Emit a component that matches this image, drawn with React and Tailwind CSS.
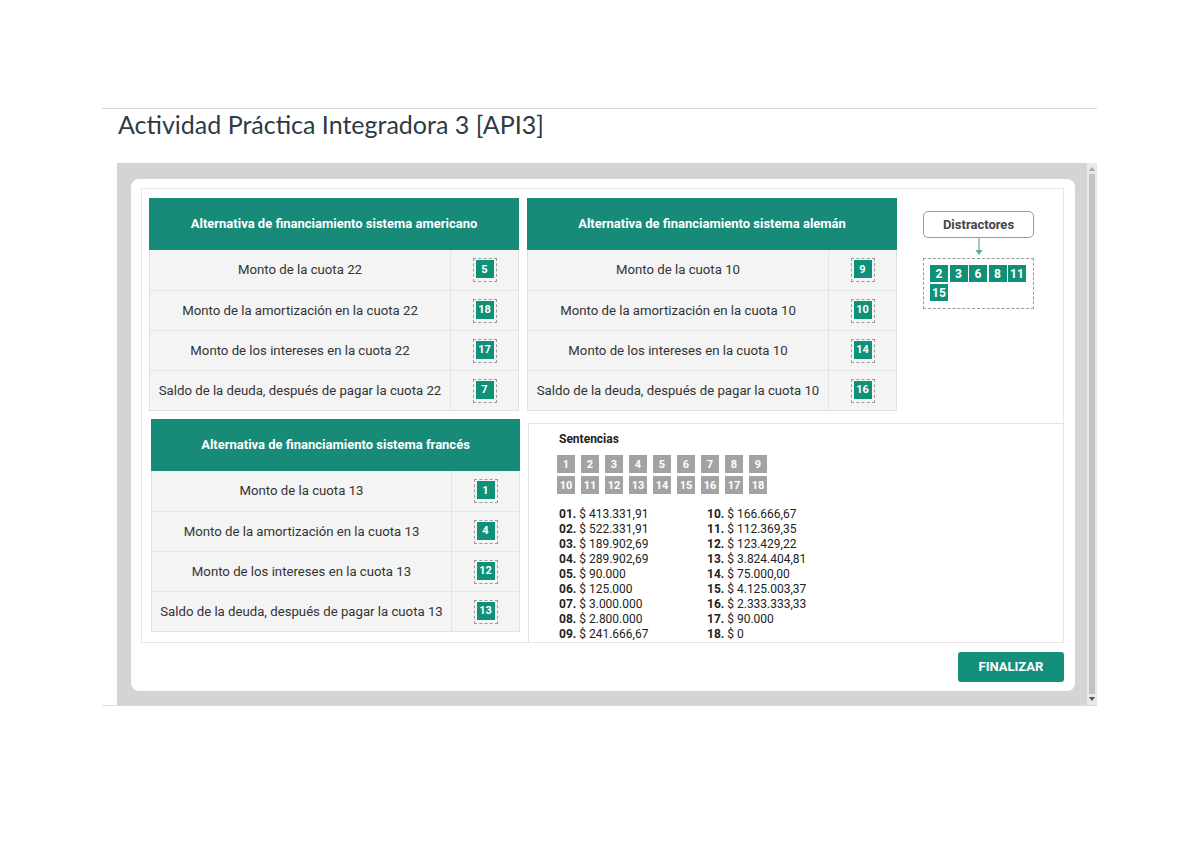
const TEAL = 'bg-[#178a78]'

const americano = [
  ['Monto de la cuota 22', '5'],
  ['Monto de la amortización en la cuota 22', '18'],
  ['Monto de los intereses en la cuota 22', '17'],
  ['Saldo de la deuda, después de pagar la cuota 22', '7'],
]

const aleman = [
  ['Monto de la cuota 10', '9'],
  ['Monto de la amortización en la cuota 10', '10'],
  ['Monto de los intereses en la cuota 10', '14'],
  ['Saldo de la deuda, después de pagar la cuota 10', '16'],
]

const frances = [
  ['Monto de la cuota 13', '1'],
  ['Monto de la amortización en la cuota 13', '4'],
  ['Monto de los intereses en la cuota 13', '12'],
  ['Saldo de la deuda, después de pagar la cuota 13', '13'],
]

const valores = [
  '$ 413.331,91', '$ 522.331,91', '$ 189.902,69', '$ 289.902,69', '$ 90.000', '$ 125.000',
  '$ 3.000.000', '$ 2.800.000', '$ 241.666,67', '$ 166.666,67', '$ 112.369,35', '$ 123.429,22',
  '$ 3.824.404,81', '$ 75.000,00', '$ 4.125.003,37', '$ 2.333.333,33', '$ 90.000', '$ 0',
]

const Badge = ({ n }) => (
  <div className="border border-dashed border-[#9b9b9b] px-[2px] pt-[1px] pb-[3px]">
    <div className="w-[18px] h-[18px] bg-[#0f9179] text-white text-[11px] font-bold flex items-center justify-center leading-none">
      {n}
    </div>
  </div>
)

const Tabla = ({ titulo, filas, width }) => (
  <div className={width}>
    <div className={`${TEAL} h-[52px] flex items-center justify-center text-white text-[13px] font-bold`}>
      {titulo}
    </div>
    <div className="border-x border-b border-[#e1e1e1] bg-[#f4f4f4]">
      {filas.map(([texto, n], i) => (
        <div key={i} className={`flex ${i > 0 ? 'h-[40px] border-t border-[#e4e4e4]' : 'h-[40px]'}`}>
          <div className="flex-1 flex items-center justify-center text-[13.2px] text-[#333]">{texto}</div>
          <div className="w-[68px] border-l border-[#e4e4e4] flex items-center justify-center">
            <Badge n={n} />
          </div>
        </div>
      ))}
    </div>
  </div>
)

const Distractores = () => (
  <div className="ml-[26px] mt-[13px] w-[111px] flex flex-col items-center">
    <div className="w-full h-[27px] border border-[#9a9a9a] rounded-[5px] flex items-center justify-center text-[13px] font-bold text-[#444]">
      Distractores
    </div>
    <svg width="10" height="20" viewBox="0 0 10 20" className="block">
      <line x1="5" y1="0" x2="5" y2="14" stroke="#5fa89b" strokeWidth="1.2" />
      <path d="M1.5 12 L5 17 L8.5 12 Z" fill="#5fa89b" />
    </svg>
    <div className="w-full h-[51px] border border-dashed border-[#9a9a9a] px-[6px] pt-[6px] flex flex-wrap content-start gap-x-[1.5px] gap-y-[2px]">
      {['2', '3', '6', '8', '11', '15'].map((n) => (
        <div key={n} className="w-[18px] h-[17px] bg-[#0f9179] text-white text-[12px] font-bold flex items-center justify-center leading-none">
          {n}
        </div>
      ))}
    </div>
  </div>
)

const Sentencias = () => (
  <div className="flex-1 mt-[4px] border-t border-l border-[#e2e2e2] pl-[28px] pt-[7px]">
    <div className="pl-[2px] text-[12px] leading-[16px] font-bold text-[#222]">Sentencias</div>
    <div className="mt-[8px] w-[220px] flex flex-wrap gap-x-[6px] gap-y-[3px]">
      {Array.from({ length: 18 }, (_, i) => (
        <div key={i} className="w-[18px] h-[18px] bg-[#a3a3a3] text-white text-[11px] font-bold flex items-center justify-center leading-none">
          {i + 1}
        </div>
      ))}
    </div>
    <div className="mt-[13px] pl-[2px] flex text-[12px] leading-[15px] text-[#222]">
      {[0, 9].map((start) => (
        <div key={start} className="w-[148px] flex flex-col">
          {valores.slice(start, start + 9).map((v, i) => (
            <div key={i}>
              <span className="font-bold">{String(start + i + 1).padStart(2, '0')}.</span> {v}
            </div>
          ))}
        </div>
      ))}
    </div>
  </div>
)

export default function App() {
  return (
    <div className="w-[1200px] h-[849px] bg-white" style={{ fontFamily: 'Roboto, "Liberation Sans", sans-serif' }}>
      <div className="pt-[108px] pl-[102px]">
        <div className="w-[995px] border-t border-[#d3d7da]">
          <h1
            className="pl-[16px] text-[25px] leading-[30px] text-[#2d3b45] font-normal"
            style={{ fontFamily: 'Lato, "Liberation Sans", sans-serif' }}
          >
            Actividad Práctica Integradora 3 [API3]
          </h1>
          <div className="ml-[15px] mt-[24px] w-[980px] h-[542px] bg-[#d2d4d6] flex">
            <div className="flex-1 pl-[14px] pt-[16px]">
              <div className="w-[944px] h-[512px] bg-white rounded-[8px] pl-[10px] pr-[11px] pt-[9px]">
                <div className="border border-[#e6e6e6] flex flex-col">
                  <div className="flex pt-[9px] pl-[7px]">
                    <Tabla titulo="Alternativa de financiamiento sistema americano" filas={americano} width="w-[370px]" />
                    <div className="w-[8px]" />
                    <Tabla titulo="Alternativa de financiamiento sistema alemán" filas={aleman} width="w-[370px]" />
                    <Distractores />
                  </div>
                  <div className="flex mt-[8px] pl-[9px]">
                    <div className="mb-[9px]">
                      <Tabla titulo="Alternativa de financiamiento sistema francés" filas={frances} width="w-[369px]" />
                    </div>
                    <div className="w-[8px]" />
                    <Sentencias />
                  </div>
                </div>
                <div className="flex justify-end mt-[9px]">
                  <button className="w-[106px] h-[30px] rounded-[3px] bg-[#12907a] text-white text-[13px] font-bold">
                    FINALIZAR
                  </button>
                </div>
              </div>
            </div>
            <div className="w-[10px] bg-[#e9e9e9] flex flex-col items-center">
              <svg width="6" height="6" viewBox="0 0 6 6" className="mt-[3px]">
                <path d="M0 5 L3 1 L6 5 Z" fill="#a8a8a8" />
              </svg>
              <div className="flex-1 w-[6px] bg-[#c3c3c3] my-[2px]" />
              <svg width="6" height="6" viewBox="0 0 6 6" className="mb-[3px]">
                <path d="M0 1 L3 5 L6 1 Z" fill="#555" />
              </svg>
            </div>
          </div>
          <div className="h-px bg-[#dcdcdc]" />
        </div>
      </div>
    </div>
  )
}
